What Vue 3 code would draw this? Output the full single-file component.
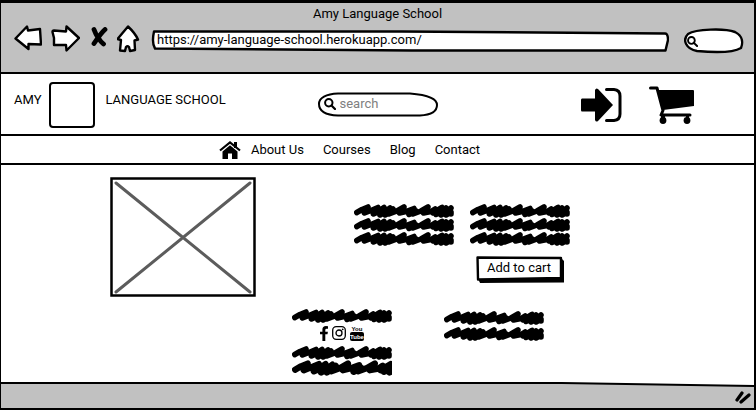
<script setup>
import { ref } from 'vue'

const address = ref('https://amy-language-school.herokuapp.com/')
const browserQuery = ref('')
const query = ref('')
const links = ['About Us', 'Courses', 'Blog', 'Contact']
</script>

<template>
  <div class="window">
    <svg class="defs" aria-hidden="true">
      <symbol id="scribble" viewBox="0 0 100 14">
        <path
          d="M2.800 8.500L8 5.500L14 3L10.500 9L17 6.500L24 3.500L19.500 10L24 8L30 3.500L26 11L31 8L36 4L31 11L36 8L39 5L35 10L43 7L50 3L45.500 9L52 7.500L60 4.500L55 10.500L62 7L59 10L67 7L74 3L69.500 9L77 7.500L81 5L79 9L88 3.500L82 10.500L88 8L92 4L87 11L93 8L97 4L92 11L97 8L97 10"
          fill="none" stroke="#000" stroke-width="5.600" stroke-linecap="round" stroke-linejoin="round" />
      </symbol>
      <symbol id="magnifier" viewBox="0 0 12 12">
        <circle cx="4.800" cy="4.800" r="3.700" fill="none" stroke="#000" stroke-width="2" />
        <path d="M7.500 7.500L11 11" stroke="#000" stroke-width="2.200" stroke-linecap="round" />
      </symbol>
    </svg>

    <header class="chrome">
      <div class="title">Amy Language School</div>
      <div class="toolbar">
        <button class="tool" aria-label="Back">
          <svg width="28" height="28" viewBox="0 0 28 28"><path d="M1.500 13.500L13 1.500L14 5.500L26 4L27 19.500L14.500 19V24Z" class="outline" /></svg>
        </button>
        <button class="tool" aria-label="Forward">
          <svg width="29" height="28" viewBox="0 0 29 28"><path d="M1.500 7Q1.500 5.500 3 5.500L15 6.500L15.500 1.500L28 13L15.500 25.500L15 20H3L3 13Z" class="outline" /></svg>
        </button>
        <button class="tool stop" aria-label="Stop">
          <svg width="17" height="20" viewBox="0 0 17 20"><path d="M3 2.500C5 8 9 14 12.500 17M14 2.500C10 6 6 12 3 16.500" fill="none" stroke="#000" stroke-width="4.800" stroke-linecap="round" /></svg>
        </button>
        <button class="tool" aria-label="Home">
          <svg width="24" height="28" viewBox="0 0 24 28"><path d="M11 1.500L.500 14L4 15L3 25.500L8 26L9 22Q10.500 20.500 12 22L13 26L18 25L17.500 15.500L21 14.500Q18 8 11 1.500Z" class="outline" /></svg>
        </button>
        <div class="address">
          <svg class="shape" viewBox="0 0 517 22" preserveAspectRatio="none"><path d="M3 1.500L250 1.500L513 3.500Q516 3.500 516 10L513.500 20.500L260 20.500L4 18.500Q.5 13 3 1.500Z" class="box" /></svg>
          <input v-model="address" class="url" type="text" aria-label="Address">
        </div>
        <div class="finder">
          <svg class="shape" viewBox="0 0 60 26" preserveAspectRatio="none"><path d="M4 6C12 1 40 0 51 4C59 8 59 15 57 20C47 26 24 24 13 23C2 21-2 12 4 6Z" class="box" /></svg>
          <svg class="lens" width="11" height="11"><use href="#magnifier" /></svg>
          <input v-model="browserQuery" class="finder-input" type="text" aria-label="Browser search">
        </div>
      </div>
    </header>

    <div class="masthead">
      <div class="brand">
        <span>AMY</span>
        <span class="logo"></span>
        <span>LANGUAGE SCHOOL</span>
      </div>
      <div class="search">
        <svg class="shape" viewBox="0 0 120 25" preserveAspectRatio="none"><path d="M20 1.500L92 1.500C112 3 119 8 119 13C119 20 112 23 102 23.500L20 23.500C6 23 1 19 1 12C1 6 8 2 20 1.500Z" class="box thin" /></svg>
        <svg class="lens" width="12" height="12"><use href="#magnifier" /></svg>
        <input v-model="query" class="search-input" type="text" placeholder="search" aria-label="Search">
      </div>
      <div class="actions">
        <a href="#" aria-label="Log in">
          <svg width="42" height="36" viewBox="0 0 42 36">
            <path d="M2 11.500H15V3Q16 .5 18 2L33 18L18 34Q16 35.500 15 33V24.500H2Q1 24.500 1 23V13Q1 11.500 2 11.500Z" />
            <path d="M26.500 2.500H34Q40 3 40 9V27Q40 33 34 33.500H26.500" fill="none" stroke="#000" stroke-width="3" stroke-linecap="round" />
          </svg>
        </a>
        <a href="#" aria-label="Cart">
          <svg width="45" height="38" viewBox="0 0 45 38">
            <path d="M1.500 2H8L14 24.500L12 29H41" fill="none" stroke="#000" stroke-width="3" stroke-linecap="round" stroke-linejoin="round" />
            <path d="M8 4H44Q45 4 45 5V20L14 24Z" />
            <circle cx="14" cy="34.500" r="3.400" /><circle cx="38" cy="34.500" r="3.400" />
            <path d="M12 29H16V34H12ZM37 29H40V34H37Z" />
          </svg>
        </a>
      </div>
    </div>

    <nav class="nav">
      <a href="#" class="home" aria-label="Home">
        <svg width="22" height="18" viewBox="0 0 22 18">
          <path d="M15 1H18V7H15Z" />
          <path d="M3.500 10.500L11 4.200L18.500 10.500V18H13V12.500H9V18H3.500Z" />
          <path d="M1 9.500L11 1.500L21 9.500" fill="none" stroke="#000" stroke-width="2.200" />
        </svg>
      </a>
      <a v-for="link in links" :key="link" href="#">{{ link }}</a>
    </nav>

    <main class="content">
      <section class="product">
        <svg class="picture" viewBox="0 0 146 120" role="img" aria-label="Course picture">
          <rect x="1.500" y="1.500" width="143" height="117" fill="#fff" stroke="#000" stroke-width="2.500" />
          <path d="M6 6L140 115M140 6L6 115" stroke="#5c5c5c" stroke-width="3" stroke-linecap="round" />
        </svg>
        <div class="details">
          <div class="lines">
            <svg v-for="n in 3" :key="n" class="scribble"><use href="#scribble" /></svg>
          </div>
          <div class="lines">
            <svg v-for="n in 3" :key="n" class="scribble"><use href="#scribble" /></svg>
          </div>
          <button class="add">
            <svg class="shape" viewBox="0 0 87 27" preserveAspectRatio="none">
              <path d="M3 4L85 3L87 5V26.500L4 27L3 25Z" />
              <path d="M1.500 1.500L84 2V22L2 23.500Z" class="box" />
            </svg>
            <span class="add-text">Add to cart</span>
          </button>
        </div>
      </section>

      <footer class="foot">
        <div class="contact">
          <svg class="scribble"><use href="#scribble" /></svg>
          <div class="social">
            <a href="#" aria-label="Facebook">
              <svg width="8" height="15" viewBox="0 0 8 15"><path d="M8 .2V2.700H6.600Q5.300 2.700 5.300 4V5.700H7.900L7.500 8.300H5.300V15H2.400V8.300H0V5.700H2.400V3.600Q2.400 0 6 0Z" /></svg>
            </a>
            <a href="#" aria-label="Instagram">
              <svg width="14" height="14" viewBox="0 0 14 14"><rect x=".7" y=".7" width="12.600" height="12.600" rx="3.500" fill="none" stroke="#000" stroke-width="1.300" /><circle cx="7" cy="7" r="3" fill="none" stroke="#000" stroke-width="1.300" /><circle cx="10.700" cy="3.300" r=".9" /></svg>
            </a>
            <a href="#" aria-label="YouTube">
              <svg width="14" height="16" viewBox="0 0 14 16">
                <text x="7" y="6" text-anchor="middle" class="you">You</text>
                <rect y="7" width="14" height="9" rx="2" />
                <text x="7" y="14" text-anchor="middle" class="tube">Tube</text>
              </svg>
            </a>
          </div>
          <svg class="scribble"><use href="#scribble" /></svg>
          <svg class="scribble tall" viewBox="0 0 100 16"><use href="#scribble" width="112" height="16" /></svg>
        </div>
        <div class="notes">
          <svg class="scribble"><use href="#scribble" /></svg>
          <svg class="scribble"><use href="#scribble" /></svg>
        </div>
      </footer>
    </main>

    <div class="status">
      <svg class="edge" viewBox="0 0 752 5" preserveAspectRatio="none"><path d="M0 1L560 1L752 4V5H0Z" fill="#c1c1c1" /><path d="M0 1L560 1L752 4" fill="none" stroke="#000" stroke-width="2" /></svg>
      <svg class="grip" width="16" height="13" viewBox="0 0 16 13"><path d="M2 9L7 2M6 11L14 4" stroke="#000" stroke-width="3.200" stroke-linecap="round" /></svg>
    </div>
  </div>
</template>

<style>
body {
  margin: 0;
  background: #fff;
}
</style>

<style scoped>
.window {
  box-sizing: border-box;
  min-height: 100vh;
  display: flex;
  flex-direction: column;
  border: 2px solid #000;
  border-top-width: 3px;
  border-left-width: 1px;
  color: #000;
  background: #fff;
  font-family: Roboto, "Liberation Sans", sans-serif;
  font-size: 13px;
  line-height: 20px;
}
.defs {
  position: absolute;
  width: 0;
  height: 0;
}
svg {
  display: block;
  flex: none;
}
a {
  color: inherit;
  text-decoration: none;
}
button {
  border: 0;
  padding: 0;
  background: none;
  color: inherit;
  font: inherit;
}
input {
  box-sizing: border-box;
  width: 100%;
  min-width: 0;
  border: 0;
  padding: 0;
  outline: 0;
  background: none;
  color: inherit;
  font: inherit;
}
.outline {
  fill: #fff;
  stroke: #000;
  stroke-width: 2.4;
  stroke-linejoin: round;
}
.box {
  fill: #fff;
  stroke: #000;
  stroke-width: 2.4;
  stroke-linejoin: round;
  vector-effect: non-scaling-stroke;
}
.thin {
  stroke-width: 2;
}
.shape {
  grid-area: 1 / 1 / 2 / -1;
  width: 100%;
  height: 100%;
}
.chrome {
  height: 69px;
  background: #c1c1c1;
  border-bottom: 2px solid #000;
}
.title {
  padding-top: 1px;
  text-align: center;
}
.toolbar {
  display: flex;
  align-items: center;
  gap: 9px;
  padding: 0 10px 0 13px;
}
.stop {
  padding: 0 0 4px 2px;
}
.address {
  flex: 1;
  display: grid;
  height: 22px;
  margin: 4px 6px 0 1px;
}
.url {
  grid-area: 1 / 1;
  padding: 0 6px 2px;
}
.finder {
  display: grid;
  grid-template-columns: 18px 1fr;
  align-items: center;
  width: 60px;
  height: 26px;
  margin-top: 4px;
}
.finder .lens {
  grid-area: 1 / 1;
  justify-self: end;
  margin-right: 4px;
}
.finder-input {
  grid-area: 1 / 2;
}
.masthead {
  display: grid;
  grid-template-columns: 1fr 120px 1fr;
  align-items: center;
  height: 60px;
  border-bottom: 2px solid #000;
}
.brand {
  display: flex;
  padding: 2px 0 0 13px;
  gap: 8px;
}
.brand span {
  padding-top: 8px;
}
.brand .logo {
  box-sizing: border-box;
  width: 46px;
  height: 46px;
  margin-right: 2px;
  border: 2px solid #000;
  border-radius: 4px;
}
.search {
  display: grid;
  grid-template-columns: 22px 1fr;
  height: 25px;
  align-items: center;
}
.search .lens {
  grid-area: 1 / 1;
  justify-self: center;
  margin-left: 2px;
}
.search-input {
  grid-area: 1 / 2;
}
.search-input::placeholder {
  color: #808080;
  opacity: 1;
}
.actions {
  display: flex;
  justify-content: flex-end;
  align-items: center;
  gap: 27px;
  padding: 2px 60px 0 0;
}
.nav {
  display: flex;
  justify-content: center;
  align-items: center;
  gap: 19px;
  height: 27px;
  padding-right: 56px;
  border-bottom: 2px solid #000;
}
.home {
  margin-right: -9px;
}
.content {
  flex: 1;
}
.product {
  display: flex;
  justify-content: center;
  gap: 98px;
  padding: 12px 75px 0 0;
}
.picture {
  width: 146px;
  height: 120px;
}
.details {
  display: grid;
  grid-template-columns: 100px 100px;
  align-content: start;
  column-gap: 16px;
  row-gap: 10px;
  padding-top: 27px;
}
.scribble {
  width: 100px;
  height: 14px;
}
.tall {
  height: 16px;
}
.add {
  grid-column: 2;
  justify-self: center;
  display: grid;
  width: 88px;
  height: 27px;
}
.add-text {
  grid-area: 1 / 1;
  padding: 2px 2px 0 0;
  z-index: 1;
}
.foot {
  display: flex;
  justify-content: center;
  gap: 52px;
  padding: 12px 0 4px 81px;
}
.social {
  display: flex;
  justify-content: center;
  align-items: center;
  gap: 4px;
  height: 20px;
  padding-bottom: 3px;
}
.notes {
  display: grid;
  align-content: start;
  gap: 2px;
  padding-top: 2px;
}
.you,
.tube {
  font-family: "Liberation Sans Narrow", "Liberation Sans", sans-serif;
  font-size: 6px;
  font-weight: 700;
}
.tube {
  fill: #fff;
}
.status {
  display: flex;
  flex-direction: column;
  height: 26px;
  background: #c1c1c1;
}
.edge {
  width: 100%;
  height: 5px;
  background: #fff;
}
.grip {
  align-self: flex-end;
  margin: 4px 3px 0 0;
}
</style>
